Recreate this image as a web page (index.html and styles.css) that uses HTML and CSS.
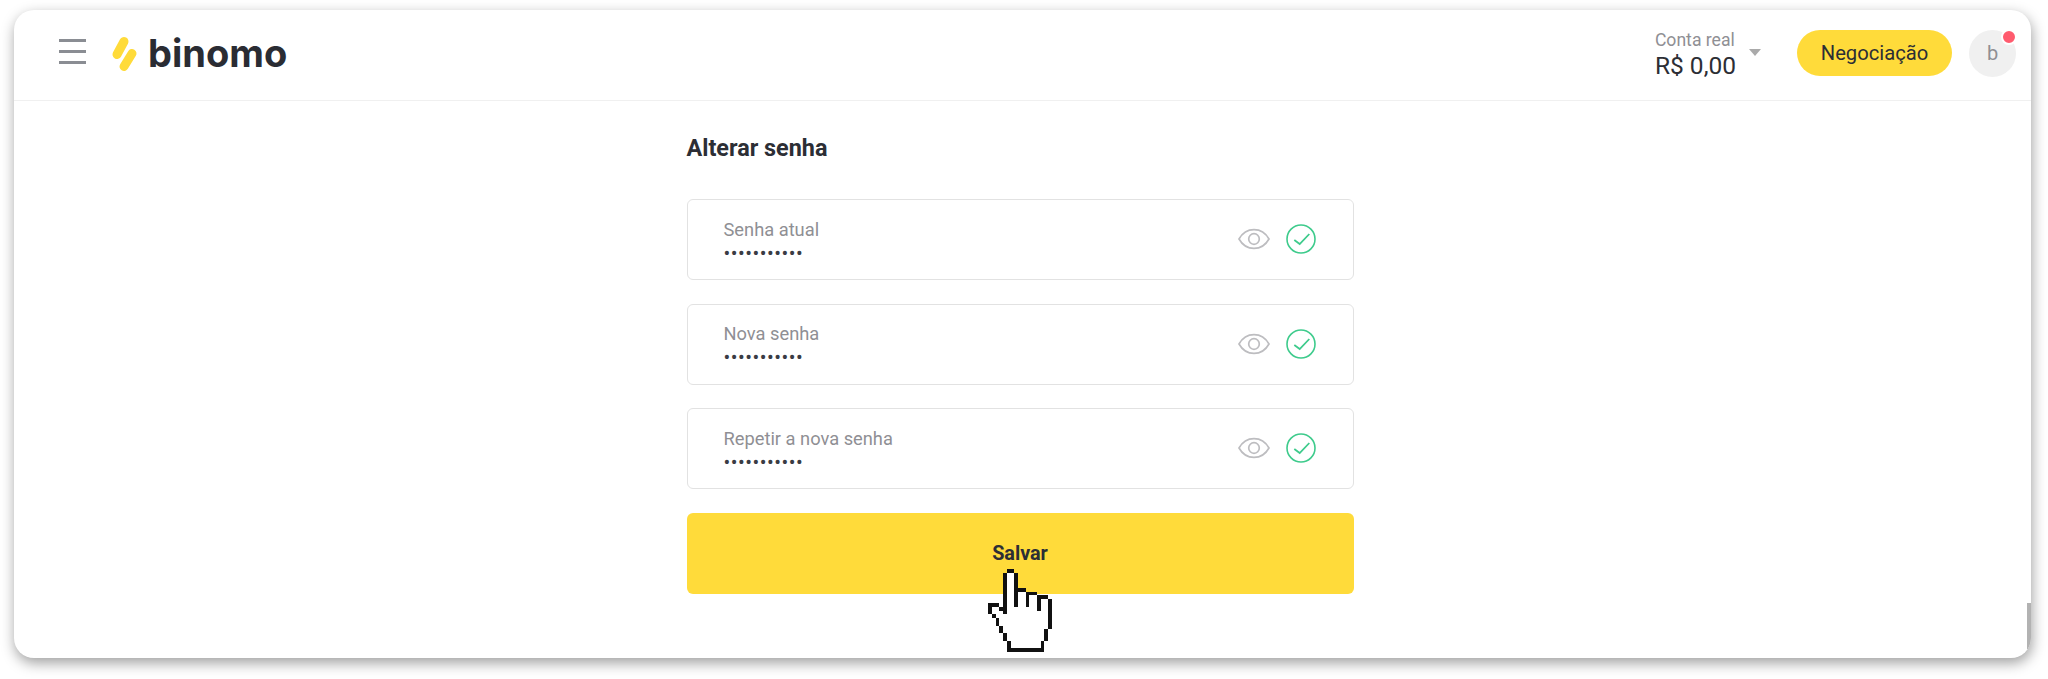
FILE: index.html
```html
<!DOCTYPE html>
<html lang="pt">
<head>
    <meta charset="UTF-8">
    <meta name="viewport" content="width=device-width, initial-scale=1.0">
    <title>Binomo - Alterar senha</title>
    <link rel="stylesheet" href="styles.css">
</head>
<body>
    <div class="window">
        <header class="topbar">
            <div class="menu-icon"><span></span><span></span><span></span></div>
            <svg class="logo-mark" width="26" height="34" viewBox="0 0 26 34">
                <path d="M12 3.5 L5 16.5 M20 15.5 L12 28.5" stroke="#ffdb3a" stroke-width="9" stroke-linecap="round" fill="none"/>
            </svg>
            <div class="logo-text">binomo</div>
            <div class="spacer"></div>
            <div class="account">
                <div class="account-type">Conta real</div>
                <div class="account-sum">R$ 0,00</div>
            </div>
            <div class="caret"></div>
            <button class="trade-btn">Negociação</button>
            <div class="avatar">b<i class="avatar-dot"></i></div>
        </header>

        <main class="content">
            <form class="form">
                <h1 class="form-title">Alterar senha</h1>

                <div class="field">
                    <div class="field-text">
                        <div class="field-label">Senha atual</div>
                        <div class="field-value">•••••••••••</div>
                    </div>
                    <svg class="eye" width="32" height="22" viewBox="0 0 32 22"><path d="M1 11 C8 -1.5 24 -1.5 31 11 C24 23.5 8 23.5 1 11 Z" fill="none" stroke="#bdbdc0" stroke-width="1.7"/><circle cx="16" cy="11" r="5.3" fill="none" stroke="#bdbdc0" stroke-width="1.7"/></svg>
                    <svg class="check" width="30" height="30" viewBox="0 0 30 30"><circle cx="15" cy="15" r="14" fill="none" stroke="#3ecb8c" stroke-width="1.6"/><path d="M8.3 16 L13.7 20 L23.3 10" fill="none" stroke="#3ecb8c" stroke-width="1.8"/></svg>
                </div>

                <div class="field">
                    <div class="field-text">
                        <div class="field-label">Nova senha</div>
                        <div class="field-value">•••••••••••</div>
                    </div>
                    <svg class="eye" width="32" height="22" viewBox="0 0 32 22"><path d="M1 11 C8 -1.5 24 -1.5 31 11 C24 23.5 8 23.5 1 11 Z" fill="none" stroke="#bdbdc0" stroke-width="1.7"/><circle cx="16" cy="11" r="5.3" fill="none" stroke="#bdbdc0" stroke-width="1.7"/></svg>
                    <svg class="check" width="30" height="30" viewBox="0 0 30 30"><circle cx="15" cy="15" r="14" fill="none" stroke="#3ecb8c" stroke-width="1.6"/><path d="M8.3 16 L13.7 20 L23.3 10" fill="none" stroke="#3ecb8c" stroke-width="1.8"/></svg>
                </div>

                <div class="field">
                    <div class="field-text">
                        <div class="field-label">Repetir a nova senha</div>
                        <div class="field-value">•••••••••••</div>
                    </div>
                    <svg class="eye" width="32" height="22" viewBox="0 0 32 22"><path d="M1 11 C8 -1.5 24 -1.5 31 11 C24 23.5 8 23.5 1 11 Z" fill="none" stroke="#bdbdc0" stroke-width="1.7"/><circle cx="16" cy="11" r="5.3" fill="none" stroke="#bdbdc0" stroke-width="1.7"/></svg>
                    <svg class="check" width="30" height="30" viewBox="0 0 30 30"><circle cx="15" cy="15" r="14" fill="none" stroke="#3ecb8c" stroke-width="1.6"/><path d="M8.3 16 L13.7 20 L23.3 10" fill="none" stroke="#3ecb8c" stroke-width="1.8"/></svg>
                </div>

                <div class="save-wrap">
                    <button class="save-btn" type="button">Salvar</button>
                    <!-- pointer on top of the button -->
                    <svg class="hand" width="64" height="83" viewBox="0 0 17 22" shape-rendering="crispEdges">
                        <path fill="#fff" d="M5 1H7V6H10V7H13V8H16V16H15V19H14V21H5V19H4V17H3V15H2V13H1V12H0V10H3V11H5Z"/>
                        <path fill="#111" d="M5 0h2v1H5zM4 1h1v11H4zM7 1h1v9H7zM8 5h2v1H8zM10 6h1v4h-1zM11 6h2v1h-2zM13 7h1v4h-1zM14 7h2v1h-2zM16 8h1v8h-1zM15 16h1v3h-1zM14 19h1v3h-1zM5 21h9v1H5zM5 19h1v2H5zM4 17h1v2H4zM3 15h1v2H3zM2 13h1v2H2zM1 12h1v1H1zM0 9h1v3H0zM1 9h2v1H1zM3 10h1v1H3z"/>
                    </svg>
                </div>
            </form>
        </main>

        <div class="scroll-thumb"></div>
    </div>
</body>
</html>
```

FILE: styles.css
```css
html, body {
    margin: 0;
    padding: 0;
    width: 100%;
    height: 100%;
    overflow: hidden;
    background: #fff;
    font-family: Roboto, "Liberation Sans", sans-serif;
}
.window {
    position: relative;
    box-sizing: border-box;
    margin: 10px 17px 0 14px;
    height: 648px;
    background: #fff;
    border-radius: 20px;
    box-shadow: 1px 5px 14px rgba(0, 0, 0, 0.38);
    overflow: hidden;
    display: flex;
    flex-direction: column;
}
.topbar {
    box-sizing: border-box;
    height: 91px;
    flex-shrink: 0;
    border-bottom: 1px solid #f0f0f0;
    display: flex;
    align-items: center;
    padding: 0 15px 4px 45px;
}
.menu-icon {
    width: 27px;
    display: flex;
    flex-direction: column;
    gap: 8px;
    margin-top: -3px;
}
.menu-icon span {
    display: block;
    height: 3px;
    background: #8a8d93;
}
.logo-mark {
    margin-left: 26px;
    margin-top: 3px;
    overflow: visible;
}
.logo-text {
    margin-left: 10px;
    font-family: Inter, sans-serif;
    font-weight: 700;
    font-size: 38px;
    color: #2a2c33;
}
.spacer {
    flex: 1;
}
.account {
    margin-top: 1px;
}
.account-type {
    font-size: 17.6px;
    line-height: 23px;
    color: #8f8f94;
}
.account-sum {
    font-size: 24.5px;
    line-height: 27px;
    color: #2c2e35;
}
.caret {
    width: 0;
    height: 0;
    margin: -2px 36px 0 13px;
    border-left: 6px solid transparent;
    border-right: 6px solid transparent;
    border-top: 7px solid #aaa;
}
.trade-btn {
    width: 155px;
    height: 46px;
    border: none;
    border-radius: 23px;
    background: #ffdb3a;
    color: #2c2e35;
    font-family: inherit;
    font-size: 20.2px;
    padding: 0;
}
.avatar {
    position: relative;
    width: 47px;
    height: 47px;
    margin-left: 17px;
    border-radius: 50%;
    background: #f0f0f0;
    color: #8f8f94;
    font-size: 20px;
    display: flex;
    align-items: center;
    justify-content: center;
}
.avatar-dot {
    position: absolute;
    top: -1px;
    right: -1px;
    width: 12px;
    height: 12px;
    border: 2px solid #fff;
    border-radius: 50%;
    background: #ff5b6e;
}
.content {
    flex: 1;
    display: flex;
    justify-content: center;
}
.form {
    width: 667px;
    margin-left: -5px;
}
.form-title {
    margin: 34px 0 38px;
    font-size: 23.4px;
    line-height: 26px;
    font-weight: 700;
    color: #2c2e35;
}
.field {
    box-sizing: border-box;
    height: 81px;
    margin-bottom: 23.67px;
    padding: 0 37px 0 36px;
    border: 1px solid #e2e2e2;
    border-radius: 6px;
    display: flex;
    align-items: center;
}
.field-text {
    flex: 1;
}
.field-label {
    font-size: 18.3px;
    line-height: 22px;
    color: #8f8f94;
}
.field-value {
    margin-top: 4px;
    font-size: 20px;
    line-height: 16px;
    letter-spacing: 0.5px;
    color: #3a3c44;
}
.eye {
    margin-top: -1px;
}
.check {
    margin-left: 16px;
    margin-top: -1px;
}
.save-wrap {
    position: relative;
}
.save-btn {
    display: block;
    width: 100%;
    height: 81px;
    border: none;
    border-radius: 6px;
    background: #ffdb3a;
    color: #2c2e35;
    font-family: inherit;
    font-size: 19.8px;
    font-weight: 700;
    padding: 0;
}
.hand {
    position: absolute;
    left: 301px;
    top: 56px;
}
.scroll-thumb {
    position: absolute;
    right: 0;
    top: 593px;
    width: 4px;
    height: 46px;
    background: #b2b2b2;
}
```
